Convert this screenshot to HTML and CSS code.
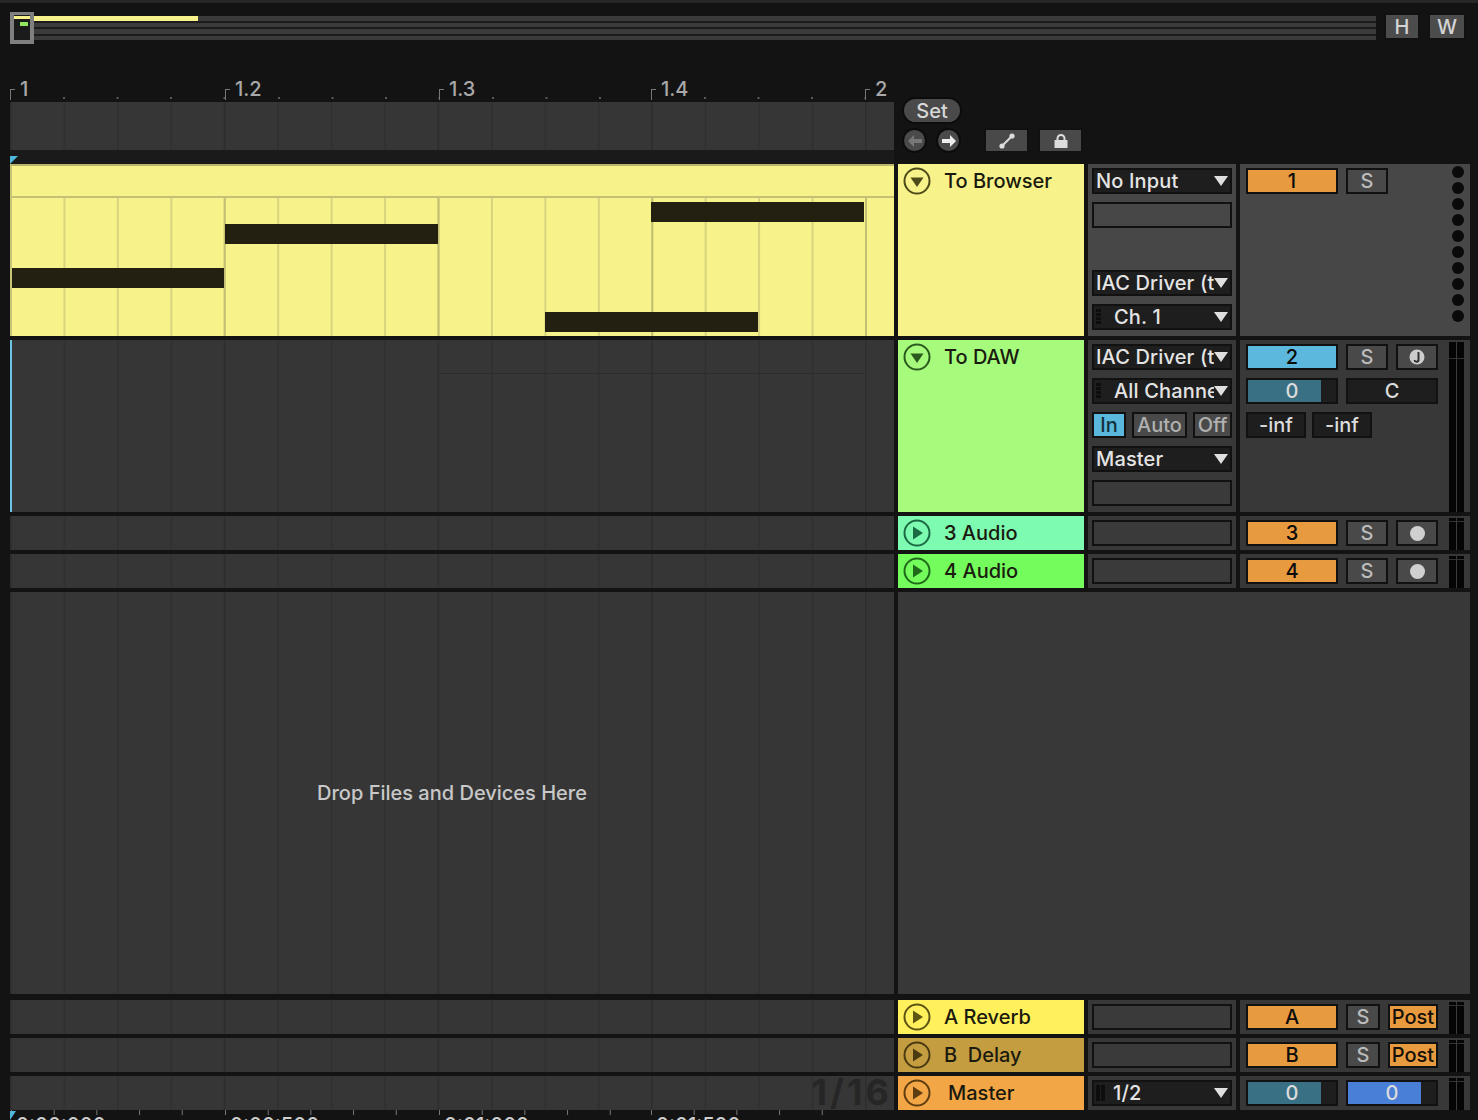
FILE: index.html
```html
<!DOCTYPE html>
<html lang="en">
<head>
    <meta charset="UTF-8">
    <title>Arrangement View</title>
    <link rel="stylesheet" href="styles.css">
</head>
<body>
    <div class="app">
        <div class="overview">
            <div class="thumb"><span class="thumb-clip"></span><span class="thumb-note"></span></div>
            <div class="stripes">
                <div class="stripe"><span class="stripe-fill"></span></div>
                <div class="stripe"></div>
                <div class="stripe"></div>
                <div class="stripe"></div>
            </div>
            <button class="btn hw-btn btn-h">H</button>
            <button class="btn hw-btn btn-w">W</button>
        </div>

        <div class="timeline">
            <div class="timeline-left">
                <div class="ruler">
                    <div class="ruler-bar bar-a">1</div>
                    <div class="ruler-bar bar-b">1.2</div>
                    <div class="ruler-bar bar-c">1.3</div>
                    <div class="ruler-bar bar-d">1.4</div>
                    <div class="ruler-bar bar-e">2</div>
                </div>
                <div class="lane lines locators"></div>
                <div class="start-band"><span class="start-marker"></span></div>
            </div>
            <div class="timeline-right">
                <button class="set-btn">Set</button>
                <div class="loc-row">
                    <span class="round-btn dim">
                        <svg width="16" height="14" viewBox="0 0 16 14"><path d="M1 7 7 1v4h8v4H7v4z"/></svg>
                    </span>
                    <span class="round-btn">
                        <svg width="16" height="14" viewBox="0 0 16 14"><path d="M15 7 9 1v4H1v4h8v4z"/></svg>
                    </span>
                    <button class="btn tool-btn first-tool">
                        <svg width="16" height="16" viewBox="0 0 16 16"><path d="M2.500 13.500 13 3" stroke="#ddd" stroke-width="2"/><circle cx="3" cy="13" r="2.600" fill="#ddd"/><circle cx="13" cy="3" r="2.600" fill="#ddd"/></svg>
                    </button>
                    <button class="btn tool-btn">
                        <svg width="16" height="16" viewBox="0 0 16 16"><path d="M4.500 8V5.500a3.500 3.500 0 0 1 7 0V8" fill="none" stroke="#ddd" stroke-width="2"/><rect x="1.500" y="7" width="13" height="8" fill="#ddd"/></svg>
                    </button>
                </div>
            </div>
        </div>

        <!-- MIDI tracks -->
        <div class="track track-tall">
            <div class="clip">
                <div class="clip-head"></div>
                <div class="clip-body">
                    <span class="note note-1"></span>
                    <span class="note note-2"></span>
                    <span class="note note-3"></span>
                    <span class="note note-4"></span>
                </div>
            </div>
            <div class="title t-browser">
                <svg class="fold" width="28" height="28" viewBox="0 0 28 28"><circle cx="14" cy="14" r="12.500" fill="none" stroke="currentColor" stroke-width="2"/><path d="M7.500 10.500h13L14 20z" fill="currentColor"/></svg>
                <span>To Browser</span>
            </div>
            <div class="io io-selected">
                <div class="dd"><span class="dd-label">No Input</span><i class="arrow"></i></div>
                <div class="box"></div>
                <div class="slot"></div>
                <div class="dd"><span class="dd-label">IAC Driver (to DAW)</span><i class="arrow"></i></div>
                <div class="dd"><span class="grip"></span><span class="dd-label">Ch. 1</span><i class="arrow"></i></div>
            </div>
            <div class="mixer mixer-selected">
                <div class="mix-body">
                    <div class="mix-row">
                        <button class="btn num orange">1</button>
                        <button class="btn solo">S</button>
                    </div>
                </div>
                <div class="dots">
                    <i></i><i></i><i></i><i></i><i></i><i></i><i></i><i></i><i></i><i></i>
                </div>
            </div>
        </div>

        <div class="track track-tall">
            <div class="lane lines lane-playing"><span class="sub-lane"></span></div>
            <div class="title t-daw">
                <svg class="fold" width="28" height="28" viewBox="0 0 28 28"><circle cx="14" cy="14" r="12.500" fill="none" stroke="currentColor" stroke-width="2"/><path d="M7.500 10.500h13L14 20z" fill="currentColor"/></svg>
                <span>To DAW</span>
            </div>
            <div class="io">
                <div class="dd"><span class="dd-label">IAC Driver (to Browser)</span><i class="arrow"></i></div>
                <div class="dd"><span class="grip"></span><span class="dd-label">All Channels</span><i class="arrow"></i></div>
                <div class="monitor">
                    <button class="btn mon mon-in">In</button>
                    <button class="btn mon mon-auto">Auto</button>
                    <button class="btn mon mon-off">Off</button>
                </div>
                <div class="dd"><span class="dd-label">Master</span><i class="arrow"></i></div>
                <div class="box"></div>
            </div>
            <div class="mixer">
                <div class="mix-body">
                    <div class="mix-row">
                        <button class="btn num blue">2</button>
                        <button class="btn solo">S</button>
                        <button class="btn solo">
                            <svg width="16" height="16" viewBox="0 0 16 16"><circle cx="8" cy="8" r="7.500" fill="#ccc"/><path d="M9.500 3v7.500a1.800 1.800 0 0 1-4 .5" fill="none" stroke="#333" stroke-width="2"/></svg>
                        </button>
                    </div>
                    <div class="mix-row">
                        <div class="btn vol teal">0</div>
                        <div class="btn pan">C</div>
                    </div>
                    <div class="mix-row inf-row">
                        <div class="btn inf">-inf</div>
                        <div class="btn inf">-inf</div>
                    </div>
                </div>
                <div class="meter meter-tall"></div>
            </div>
        </div>

        <!-- audio tracks -->
        <div class="track track-small">
            <div class="lane lines"></div>
            <div class="title t-audio3">
                <svg class="fold" width="28" height="28" viewBox="0 0 28 28"><circle cx="14" cy="14" r="12.500" fill="none" stroke="currentColor" stroke-width="2"/><path d="M10 7.500 20 14l-10 6.500z" fill="currentColor"/></svg>
                <span>3 Audio</span>
            </div>
            <div class="io"><div class="box"></div></div>
            <div class="mixer">
                <div class="mix-body">
                    <div class="mix-row">
                        <button class="btn num orange">3</button>
                        <button class="btn solo">S</button>
                        <button class="btn solo"><i class="rec"></i></button>
                    </div>
                </div>
                <div class="meter"></div>
            </div>
        </div>

        <div class="track track-small">
            <div class="lane lines"></div>
            <div class="title t-audio4">
                <svg class="fold" width="28" height="28" viewBox="0 0 28 28"><circle cx="14" cy="14" r="12.500" fill="none" stroke="currentColor" stroke-width="2"/><path d="M10 7.500 20 14l-10 6.500z" fill="currentColor"/></svg>
                <span>4 Audio</span>
            </div>
            <div class="io"><div class="box"></div></div>
            <div class="mixer">
                <div class="mix-body">
                    <div class="mix-row">
                        <button class="btn num orange">4</button>
                        <button class="btn solo">S</button>
                        <button class="btn solo"><i class="rec"></i></button>
                    </div>
                </div>
                <div class="meter"></div>
            </div>
        </div>

        <div class="track track-drop">
            <div class="lane lines drop-lane">Drop Files and Devices Here</div>
            <div class="drop-side"></div>
        </div>

        <!-- returns and master -->
        <div class="track track-small">
            <div class="lane lines"></div>
            <div class="title t-reverb">
                <svg class="fold" width="28" height="28" viewBox="0 0 28 28"><circle cx="14" cy="14" r="12.500" fill="none" stroke="currentColor" stroke-width="2"/><path d="M10 7.500 20 14l-10 6.500z" fill="currentColor"/></svg>
                <span>A Reverb</span>
            </div>
            <div class="io"><div class="box"></div></div>
            <div class="mixer">
                <div class="mix-body">
                    <div class="mix-row">
                        <button class="btn num orange">A</button>
                        <button class="btn solo solo-small">S</button>
                        <button class="btn post">Post</button>
                    </div>
                </div>
                <div class="meter"></div>
            </div>
        </div>

        <div class="track track-small">
            <div class="lane lines"></div>
            <div class="title t-delay">
                <svg class="fold" width="28" height="28" viewBox="0 0 28 28"><circle cx="14" cy="14" r="12.500" fill="none" stroke="currentColor" stroke-width="2"/><path d="M10 7.500 20 14l-10 6.500z" fill="currentColor"/></svg>
                <span>B&nbsp; Delay</span>
            </div>
            <div class="io"><div class="box"></div></div>
            <div class="mixer">
                <div class="mix-body">
                    <div class="mix-row">
                        <button class="btn num orange">B</button>
                        <button class="btn solo solo-small">S</button>
                        <button class="btn post">Post</button>
                    </div>
                </div>
                <div class="meter"></div>
            </div>
        </div>

        <div class="track track-small">
            <div class="lane lines master-lane"><span class="grid-size">1/16</span></div>
            <div class="title t-master">
                <svg class="fold" width="28" height="28" viewBox="0 0 28 28"><circle cx="14" cy="14" r="12.500" fill="none" stroke="currentColor" stroke-width="2"/><path d="M10 7.500 20 14l-10 6.500z" fill="currentColor"/></svg>
                <span class="master-name">Master</span>
            </div>
            <div class="io">
                <div class="dd"><span class="grip grip-wide"></span><span class="dd-label">1/2</span><i class="arrow"></i></div>
            </div>
            <div class="mixer">
                <div class="mix-body">
                    <div class="mix-row">
                        <div class="btn vol teal">0</div>
                        <div class="btn vol cobalt">0</div>
                    </div>
                </div>
                <div class="meter"></div>
            </div>
        </div>

        <div class="time-ruler">
            <span class="end-marker"></span>
            <div class="time-cell cell-a">0:00:000</div>
            <div class="time-cell cell-b">0:00:500</div>
            <div class="time-cell cell-c">0:01:000</div>
            <div class="time-cell cell-d">0:01:500</div>
        </div>
    </div>
</body>
</html>
```

FILE: styles.css
```css
* {
    box-sizing: border-box;
}

html, body {
    margin: 0;
    height: 100%;
    overflow: hidden;
}

body {
    background: #131313;
    font-family: Inter, 'Liberation Sans', sans-serif;
    font-size: 20px;
    font-weight: 500;
    color: #e0e0e0;
}

.app {
    width: 1478px;
    height: 1120px;
    padding-left: 10px;
    overflow: hidden;
    border-top: 3px solid #272727;
}

button {
    font: inherit;
    padding: 0;
}

.btn {
    display: flex;
    align-items: center;
    justify-content: center;
    height: 26px;
    border: 2px solid #111;
    background: #494949;
    color: #bbb;
    line-height: 1;
}

/* overview */
.overview {
    display: flex;
    height: 41px;
    padding-top: 9px;
}

.thumb {
    position: relative;
    width: 24px;
    height: 32px;
    border: 4px solid #808080;
    border-top-width: 3px;
    background: #1b1b1b;
}

.thumb-clip {
    position: absolute;
    left: 0;
    top: 1px;
    width: 16px;
    height: 3px;
    background: #f7f28a;
}

.thumb-note {
    position: absolute;
    left: 6px;
    top: 7px;
    width: 8px;
    height: 4px;
    background: #8fe85e;
}

.stripes {
    width: 1342px;
    height: 24px;
    margin-right: 8px;
    margin-top: 4px;
    display: flex;
    flex-direction: column;
    gap: 2px;
    background: #1c1c1c;
}

.stripe {
    height: 4.500px;
    background: #3b3b3b;
}

.stripe-fill {
    display: block;
    width: 164px;
    height: 100%;
    background: #f7f28a;
}

.hw-btn {
    height: 27px;
    margin-top: 1px;
    background: #4c4c4c;
    color: #d4d4d4;
}

.btn-h {
    width: 36px;
    margin-right: 8px;
}

.btn-w {
    width: 38px;
}

/* ruler + locators */
.timeline {
    display: flex;
    height: 120px;
    gap: 4px;
}

.timeline-left {
    width: 884px;
    padding-top: 36px;
}

.ruler {
    display: flex;
    height: 22px;
    color: #a8a8a8;
}

.ruler-bar {
    position: relative;
    padding-left: 10px;
    line-height: 18px;
}

.ruler-bar::before {
    content: "";
    position: absolute;
    left: 0;
    top: 9px;
    width: 4px;
    height: 10px;
    border-left: 1px solid #777;
    border-top: 1px solid #777;
}

.ruler-bar::after {
    content: "";
    position: absolute;
    left: 53px;
    right: 0;
    top: 17px;
    height: 2px;
    background: linear-gradient(90deg, #5a5a5a 2px, transparent 2px) 0 0 / 53.500px 2px;
}

.bar-a { width: 215px; }
.bar-b { width: 214px; }
.bar-c { width: 212px; }
.bar-d { width: 214px; }
.bar-e { width: 29px; }
.bar-e::after { display: none; }

.lane {
    position: relative;
    background-color: #363636;
}

.lines {
    background-image:
        linear-gradient(90deg, #2d2d2d 1px, transparent 1px),
        linear-gradient(90deg, #313131 2px, transparent 2px);
    background-size: 213.750px 100%, 53.440px 100%;
    background-position: 0 0, 0 0;
}

.locators {
    height: 48px;
}

.start-band {
    height: 14px;
    display: flex;
    align-items: flex-end;
    background: #1a1a1a;
}

.start-marker {
    width: 0;
    height: 0;
    border-top: 8px solid #4fb6dc;
    border-right: 8px solid transparent;
}

.timeline-right {
    padding: 53px 0 0 4px;
}

.set-btn {
    display: block;
    width: 60px;
    height: 27px;
    border: 2px solid #0c0c0c;
    border-radius: 14px;
    background: #4a4a4a;
    color: #d8d8d8;
    line-height: 1;
}

.loc-row {
    display: flex;
    align-items: center;
    margin-top: 4px;
}

.round-btn {
    display: flex;
    align-items: center;
    justify-content: center;
    width: 25px;
    height: 25px;
    margin-right: 9px;
    border: 2px solid #0c0c0c;
    border-radius: 50%;
    background: #4a4a4a;
    fill: #eee;
}

.round-btn.dim {
    fill: #777;
}

.tool-btn {
    width: 45px;
    height: 25px;
    margin-right: 9px;
    background: #494949;
}

.first-tool {
    margin-left: 14px;
}

/* tracks */
.track {
    display: grid;
    grid-template-columns: 884px 186px 148px 230px;
    column-gap: 4px;
    margin-bottom: 4px;
}

.track-tall { height: 172px; }
.track-small { height: 34px; }

.track-drop {
    height: 402px;
    margin-bottom: 6px;
}

.clip {
    display: flex;
    flex-direction: column;
    border-top: 2px solid #b9b56a;
    border-left: 2px solid #c9c577;
    background: #f7f28a;
}

.clip-head {
    height: 32px;
    border-bottom: 2px solid #c4c078;
}

.clip-body {
    position: relative;
    flex: 1;
    background-image:
        linear-gradient(90deg, #c4c072 2px, transparent 2px),
        linear-gradient(90deg, #d8d37e 2px, transparent 2px);
    background-size: 213.750px 100%, 53.440px 100%;
    background-position: -2px 0, -2px 0;
}

.note {
    position: absolute;
    height: 20px;
    background: #231f11;
}

.note-1 { left: 0; top: 70px; width: 212px; }
.note-2 { left: 213px; top: 26px; width: 213px; }
.note-3 { left: 533px; top: 114px; width: 213px; }
.note-4 { left: 639px; top: 4px; width: 213px; }

.lane-playing {
    border-left: 2px solid #6cc4e4;
    background-position: -2px 0, -2px 0;
}

.sub-lane {
    position: absolute;
    left: 427px;
    top: 0;
    width: 425px;
    height: 34px;
    border-bottom: 1px solid #2c2c2c;
}

.title {
    display: flex;
    align-items: flex-start;
    padding: 3px 0 0 5px;
    gap: 13px;
    color: #1c1c10;
}

.title span {
    line-height: 28px;
    color: #1a1a0e;
}

.fold {
    flex: none;
}

.t-browser { background: #f7f28a; color: #4e4b1a; }
.t-daw { background: #a6fb7c; color: #2b5a1e; }
.t-audio3 { background: #7dfbb0; color: #1c6a44; }
.t-audio4 { background: #74fb5c; color: #1e6a1a; }
.t-reverb { background: #fff05c; color: #5e5414; }
.t-delay { background: #c49d41; color: #4a3a12; }
.t-master { background: #f3a646; color: #5e3d10; }

.master-name {
    margin-left: 4px;
}

.io {
    display: flex;
    flex-direction: column;
    gap: 8px;
    padding: 4px;
    background: #383838;
}

.io-selected {
    background: #474747;
}

.dd {
    display: flex;
    align-items: center;
    height: 26px;
    padding: 0 2px;
    border: 2px solid #111;
    background: #1e1e1e;
    color: #e4e4e4;
}

.dd-label {
    flex: 1;
    overflow: hidden;
    white-space: nowrap;
    line-height: 22px;
    letter-spacing: 0.15px;
}

.arrow {
    flex: none;
    width: 0;
    height: 0;
    border-left: 7px solid transparent;
    border-right: 7px solid transparent;
    border-top: 10px solid #e0e0e0;
}

.grip {
    flex: none;
    width: 5px;
    height: 16px;
    margin-right: 13px;
    background: repeating-linear-gradient(#0d0d0d 0 3px, #1e1e1e 3px 4px);
}

.grip-wide {
    width: 9px;
    margin-right: 8px;
    background: linear-gradient(90deg, #0d0d0d 4px, #1e1e1e 4px 5px, #0d0d0d 5px);
}

.box {
    height: 26px;
    border: 2px solid #111;
    background: #3a3a3a;
}

.io-selected .box {
    background: #474747;
}

.slot {
    height: 26px;
}

.monitor {
    display: flex;
    height: 26px;
    gap: 6px;
}

.mon {
    height: 26px;
    color: #b0b0b0;
}

.mon-in {
    width: 34px;
    background: #5ab8dc;
    color: #14303c;
}

.mon-auto {
    width: 55px;
}

.mon-off {
    width: 39px;
}

.mixer {
    display: flex;
    background: #383838;
}

.mixer-selected {
    background: #474747;
}

.mix-body {
    flex: 1;
    display: flex;
    flex-direction: column;
    gap: 8px;
    padding: 4px 0 0 6px;
}

.mix-row {
    display: flex;
    gap: 8px;
}

.num {
    width: 92px;
    color: #0c0c0c;
}

.orange { background: #e89a3f; }
.blue { background: #5cb8dc; }

.solo {
    width: 42px;
}

.solo-small {
    width: 34px;
}

.post {
    width: 50px;
    background: #e89a3f;
    color: #141008;
}

.rec {
    width: 15px;
    height: 15px;
    border-radius: 50%;
    background: #d0d0d0;
}

.vol {
    width: 92px;
    color: #dcdcdc;
    background-color: #1e1e1e;
    background-repeat: no-repeat;
    background-size: 83% 100%;
}

.teal { background-image: linear-gradient(#3a7084, #3a7084); }
.cobalt { background-image: linear-gradient(#4a7fd8, #4a7fd8); }

.pan {
    width: 92px;
    background: #1e1e1e;
    color: #dcdcdc;
}

.inf-row {
    gap: 6px;
}

.inf {
    width: 60px;
    background: #1e1e1e;
    color: #dcdcdc;
}

.meter {
    position: relative;
    flex: none;
    width: 15px;
    margin: 2px 6px 0 0;
    background: linear-gradient(90deg, #050505 7px, #3c3c3c 7px 8px, #050505 8px);
}

.meter::before {
    content: "";
    position: absolute;
    left: 0;
    right: 0;
    top: 0;
    height: 3px;
    border-bottom: 1px solid #333;
}

.meter-tall::before {
    height: 16px;
}

.dots {
    flex: none;
    display: flex;
    flex-direction: column;
    gap: 4px;
    width: 12px;
    margin: 2px 6px 0 0;
}

.dots i {
    width: 12px;
    height: 12px;
    border-radius: 50%;
    background: #0a0a0a;
}

.drop-lane {
    display: flex;
    align-items: center;
    justify-content: center;
    color: #c8c8c8;
}

.drop-side {
    grid-column: 2 / 5;
    background: #383838;
}

.master-lane {
    display: flex;
    justify-content: flex-end;
    align-items: flex-start;
    padding-right: 2px;
}

.grid-size {
    font-size: 36px;
    font-weight: 700;
    line-height: 32px;
    color: #262626;
    letter-spacing: 3px;
}

/* bottom time ruler */
.time-ruler {
    position: relative;
    display: flex;
    height: 10px;
    margin-top: -4px;
    overflow: hidden;
    background: #131313;
    color: #cfcfcf;
}

.end-marker {
    position: absolute;
    left: 0;
    top: 1px;
    width: 0;
    height: 0;
    border-left: 6px solid #4fb6dc;
    border-bottom: 9px solid transparent;
}

.time-cell {
    padding: 4px 0 0 6px;
    line-height: 22px;
    background: linear-gradient(90deg, #777 1px, transparent 1px) 1px 0 / 42.700px 5px repeat-x;
}

.cell-a { width: 214px; }
.cell-b { width: 214px; }
.cell-c { width: 212px; }
.cell-d { width: 214px; }
```
